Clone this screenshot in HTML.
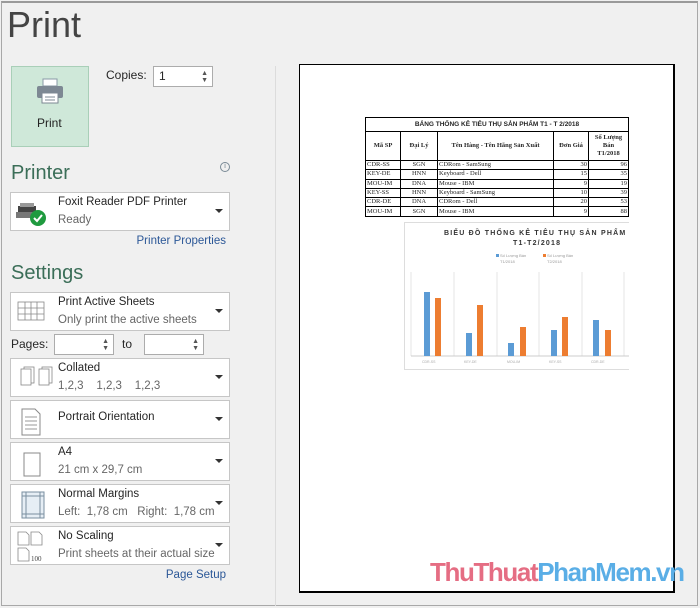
<!DOCTYPE html>
<html><head><meta charset="utf-8"><style>
*{margin:0;padding:0;box-sizing:border-box}
body{width:700px;height:608px;background:#f0f0f0;position:relative;overflow:hidden;font-family:"Segoe UI","Liberation Sans","DejaVu Sans",sans-serif;color:#262626}
.a{position:absolute}
.frame{left:1px;top:1px;width:697px;height:605px;border:1px solid #a8a8a8;border-top:2px solid #9a9a9a}
.t{font-size:12px;white-space:nowrap}
.box{position:absolute;left:10px;width:220px;height:39px;background:#fff;border:1px solid #c6c6c6}
.box .l1{position:absolute;left:47px;top:3px;font-size:11.5px;color:#262626;white-space:nowrap}
.box .l2{position:absolute;left:47px;top:21px;font-size:11.5px;color:#666;white-space:nowrap}
.box .arr{position:absolute;right:6px;top:16px;width:0;height:0;border-left:4px solid transparent;border-right:4px solid transparent;border-top:4px solid #333}
.box svg{position:absolute;left:3px;top:3px}
.hd{font-size:20px;color:#3b6e58}
.link{font-size:11.5px;color:#2b5797;white-space:nowrap}
.inp{position:absolute;background:#fff;border:1px solid #acacac;height:21px}
.spin{position:absolute;right:4px;top:3px;font-size:7px;line-height:7px;color:#555}
table{border-collapse:collapse;font-family:"Liberation Serif",serif;font-size:6.5px}
td{border:1px solid #000;padding:0 1px;height:9.3px;line-height:8px;white-space:nowrap}
</style></head><body>
<div class="a frame"></div>
<div class="a" style="left:7px;top:4px;font-size:36px;font-weight:300;color:#444;font-family:'Liberation Sans',sans-serif">Print</div>
<div class="a" style="left:275px;top:66px;width:1px;height:540px;background:#dcdcdc"></div>

<div class="a" style="left:11px;top:66px;width:78px;height:81px;background:#cfe8d9;border:1px solid #a9cfb8"></div>
<svg class="a" style="left:36px;top:78px" width="28" height="26" viewBox="0 0 28 26"><rect x="7" y="1" width="14" height="7" fill="#fff" stroke="#8a9aa6"/><rect x="1" y="8" width="26" height="12" rx="2" fill="#7d8893"/><rect x="6" y="15" width="16" height="10" fill="#fff" stroke="#7d8893"/><line x1="9" y1="19" x2="19" y2="19" stroke="#7d8893"/><line x1="9" y1="22" x2="19" y2="22" stroke="#7d8893"/></svg>
<div class="a t" style="left:37px;top:116px;color:#222">Print</div>
<div class="a t" style="left:106px;top:68px">Copies:</div>
<div class="inp" style="left:153px;top:66px;width:60px"><span class="a t" style="left:5px;top:2px">1</span><div class="spin">▲<br>▼</div></div>

<div class="a hd" style="left:11px;top:162px">Printer</div>
<div class="a" style="left:220px;top:162px;width:10px;height:10px;border:1px solid #7a8a96;border-radius:50%;font-size:7px;line-height:8px;text-align:center;color:#6a7a86">i</div>
<div class="box" style="top:192px;height:39px">
<svg width="36" height="34" viewBox="0 0 36 34"><rect x="4" y="10" width="18" height="10" fill="#444"/><rect x="2" y="16" width="20" height="6" fill="#777"/><rect x="6" y="7" width="14" height="4" fill="#999"/><circle cx="24" cy="22" r="8" fill="#1f9a3f"/><path d="M20 22l3 3 5-6" stroke="#fff" stroke-width="2" fill="none"/></svg>
<div class="l1">Foxit Reader PDF Printer</div><div class="l2">Ready</div><div class="arr"></div></div>
<div class="a link" style="right:474px;top:235px">Printer Properties</div>

<div class="a hd" style="left:11px;top:262px">Settings</div>
<div class="box" style="top:292px"><svg width="36" height="34" viewBox="0 0 36 34"><g stroke="#888" fill="#fff" stroke-width="0.8"><rect x="4" y="6" width="26" height="18"/><line x1="4" y1="12" x2="30" y2="12"/><line x1="4" y1="18" x2="30" y2="18"/><line x1="11" y1="6" x2="11" y2="24"/><line x1="17" y1="6" x2="17" y2="24"/><line x1="23" y1="6" x2="23" y2="24"/></g></svg>
<div class="l1">Print Active Sheets</div><div class="l2">Only print the active sheets</div><div class="arr"></div></div>
<div class="a t" style="left:11px;top:337px">Pages:</div>
<div class="inp" style="left:54px;top:334px;width:60px"><div class="spin">▲<br>▼</div></div>
<div class="a t" style="left:122px;top:337px">to</div>
<div class="inp" style="left:144px;top:334px;width:60px"><div class="spin">▲<br>▼</div></div>
<div class="box" style="top:358px"><svg width="40" height="34" viewBox="0 0 40 34"><g stroke="#888" fill="#fff" stroke-width="0.8"><rect x="10" y="5" width="10" height="16"/><rect x="7" y="7" width="10" height="16"/><rect x="28" y="5" width="10" height="16"/><rect x="25" y="7" width="10" height="16"/></g></svg>
<div class="l1">Collated</div><div class="l2">1,2,3&nbsp;&nbsp;&nbsp; 1,2,3&nbsp;&nbsp;&nbsp; 1,2,3</div><div class="arr"></div></div>
<div class="box" style="top:400px"><svg width="36" height="34" viewBox="0 0 36 34"><path d="M8 5h13l5 5v21H8z" fill="#fff" stroke="#888"/><g stroke="#999"><line x1="11" y1="13" x2="23" y2="13"/><line x1="11" y1="17" x2="23" y2="17"/><line x1="11" y1="21" x2="23" y2="21"/><line x1="11" y1="25" x2="23" y2="25"/></g></svg>
<div class="l1" style="top:10px">Portrait Orientation</div><div class="arr"></div></div>
<div class="box" style="top:442px"><svg width="36" height="34" viewBox="0 0 36 34"><rect x="10" y="7" width="16" height="23" fill="#fff" stroke="#888"/></svg>
<div class="l1">A4</div><div class="l2">21 cm x 29,7 cm</div><div class="arr"></div></div>
<div class="box" style="top:484px"><svg width="36" height="34" viewBox="0 0 36 34"><rect x="8" y="4" width="22" height="26" fill="#e6eef5" stroke="#7a8fa0"/><g stroke="#7a8fa0"><line x1="12" y1="4" x2="12" y2="30"/><line x1="26" y1="4" x2="26" y2="30"/><line x1="8" y1="8" x2="30" y2="8"/><line x1="8" y1="26" x2="30" y2="26"/></g></svg>
<div class="l1">Normal Margins</div><div class="l2">Left:&nbsp; 1,78 cm&nbsp;&nbsp; Right:&nbsp; 1,78 cm</div><div class="arr"></div></div>
<div class="box" style="top:526px"><svg width="40" height="34" viewBox="0 0 40 34"><g fill="#fff" stroke="#888" stroke-width="0.8"><path d="M4 2h8l3 3v10H4z"/><path d="M17 2h8l3 3v10H17z"/><path d="M4 18h8l3 3v10H4z"/></g><text x="17" y="31" font-size="7" font-family="Liberation Serif" fill="#444">100</text></svg>
<div class="l1">No Scaling</div><div class="l2">Print sheets at their actual size</div><div class="arr"></div></div>
<div class="a link" style="right:474px;top:569px">Page Setup</div>

<div class="a" style="left:299px;top:64px;width:376px;height:529px;background:#fff;border:1px solid #000;border-right:2px solid #000;border-bottom:2px solid #000"></div>
<table class="a" style="left:365px;top:117px;width:264px">
<tr><td colspan="6" style="text-align:center;height:14px;font-family:'Liberation Sans';font-size:6.5px;font-weight:bold">BẢNG THỐNG KÊ TIÊU THỤ SẢN PHẨM T1 - T 2/2018</td></tr>
<tr style="font-weight:bold;text-align:center"><td style="height:29px;width:35px">Mã SP</td><td style="width:37px">Đại Lý</td><td style="width:116px">Tên Hàng - Tên Hãng Sản Xuất</td><td style="width:35px">Đơn Giá</td><td>Số Lượng<br>Bán<br>T1/2018</td></tr>
<tr><td>CDR-SS</td><td style="text-align:center">SGN</td><td>CDRom - SamSung</td><td style="text-align:right">30</td><td style="text-align:right">96</td></tr>
<tr><td>KEY-DE</td><td style="text-align:center">HNN</td><td>Keyboard - Dell</td><td style="text-align:right">15</td><td style="text-align:right">35</td></tr>
<tr><td>MOU-IM</td><td style="text-align:center">DNA</td><td>Mouse - IBM</td><td style="text-align:right">9</td><td style="text-align:right">19</td></tr>
<tr><td>KEY-SS</td><td style="text-align:center">HNN</td><td>Keyboard - SamSung</td><td style="text-align:right">10</td><td style="text-align:right">39</td></tr>
<tr><td>CDR-DE</td><td style="text-align:center">DNA</td><td>CDRom - Dell</td><td style="text-align:right">20</td><td style="text-align:right">53</td></tr>
<tr><td>MOU-IM</td><td style="text-align:center">SGN</td><td>Mouse - IBM</td><td style="text-align:right">9</td><td style="text-align:right">88</td></tr>
</table>
<svg class="a" style="left:404px;top:222px" width="225" height="149" viewBox="404 222 225 149">
<rect x="404.5" y="222.5" width="230" height="147" fill="#fff" stroke="#ddd"/>
<text x="444" y="235" font-size="7" font-weight="bold" font-family="Liberation Sans" fill="#333" letter-spacing="1.2">BIỂU ĐỒ THỐNG KÊ TIÊU THỤ SẢN PHẨM</text>
<text x="513" y="245" font-size="7" font-weight="bold" font-family="Liberation Sans" fill="#333" letter-spacing="1.2">T1-T2/2018</text>
<rect x="496" y="254" width="3" height="3" fill="#5b9bd5"/><text x="500" y="257" font-size="4" fill="#999">Số Lượng Bán</text>
<rect x="543" y="254" width="3" height="3" fill="#ed7d31"/><text x="547" y="257" font-size="4" fill="#999">Số Lượng Bán</text>
<text x="500" y="263" font-size="4" fill="#999">T1/2018</text><text x="547" y="263" font-size="4" fill="#999">T2/2018</text>
<g stroke="#e4e4e4"><line x1="411" y1="272" x2="411" y2="356"/><line x1="454" y1="272" x2="454" y2="356"/><line x1="497" y1="272" x2="497" y2="356"/><line x1="539" y1="272" x2="539" y2="356"/><line x1="582" y1="272" x2="582" y2="356"/><line x1="624" y1="272" x2="624" y2="356"/><line x1="411" y1="356" x2="629" y2="356" stroke="#ccc"/></g>
<g fill="#5b9bd5"><rect x="424" y="292" width="6" height="64"/><rect x="466" y="333" width="6" height="23"/><rect x="508" y="343" width="6" height="13"/><rect x="551" y="330" width="6" height="26"/><rect x="593" y="320" width="6" height="36"/></g>
<g fill="#ed7d31"><rect x="435" y="298" width="6" height="58"/><rect x="477" y="305" width="6" height="51"/><rect x="520" y="327" width="6" height="29"/><rect x="562" y="317" width="6" height="39"/><rect x="605" y="330" width="6" height="26"/></g>
<g font-size="3.5" fill="#aaa"><text x="422" y="363">CDR-SS</text><text x="464" y="363">KEY-DE</text><text x="507" y="363">MOU-IM</text><text x="549" y="363">KEY-SS</text><text x="591" y="363">CDR-DE</text></g>
</svg>
<div class="a" style="left:430px;top:557px;font-size:26px;font-weight:bold;font-family:'Liberation Sans',sans-serif;letter-spacing:-1.4px;white-space:nowrap"><span style="color:#e56d83">ThuThuat</span><span style="color:#5aaee6">PhanMem.vn</span></div>
</body></html>
